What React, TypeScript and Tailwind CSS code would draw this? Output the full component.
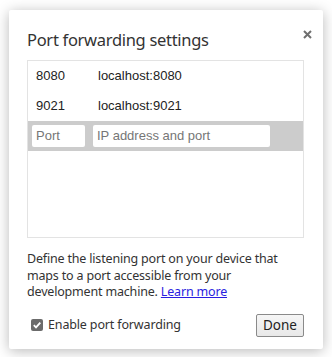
import React from "react";

export default function App() {
  return (
    <div className="w-[332px] h-[357px] bg-white pt-[10px] pl-[9px]" style={{ fontFamily: '"Noto Sans", "Open Sans", sans-serif' }}>
      <div className="relative w-[314px] h-[339px] bg-white rounded-[2px] shadow-[0_2px_14px_rgba(0,0,0,0.28)] pl-[18px] pr-[19px] pt-[18px]">
        <button className="absolute right-[11px] top-[20px] w-[9px] h-[9px] flex items-center justify-center">
          <svg width="9" height="9" viewBox="0 0 9 9">
            <path d="M1 1 L8 8 M8 1 L1 8" stroke="#6f6f6f" strokeWidth="2" />
          </svg>
        </button>
        <div className="text-[16.5px] tracking-[-0.3px] leading-[24px] text-[#333] h-[32px]">Port forwarding settings</div>
        <div className="border border-[#e3e3e3] h-[178px] text-[13px] text-[#222]" style={{ fontFamily: '"Liberation Sans", Arial, sans-serif' }}>
          <div className="h-[30px] flex items-center pl-[8px]">
            <span className="w-[62px]">8080</span>
            <span>localhost:8080</span>
          </div>
          <div className="h-[30px] flex items-center pl-[8px]">
            <span className="w-[62px]">9021</span>
            <span>localhost:9021</span>
          </div>
          <div className="h-[30px] flex items-center bg-[#cccccc] pl-[4px] gap-[8px]">
            <div className="w-[53px] h-[22px] bg-white rounded-[2px] pl-[4px] flex items-center text-[#767676]">Port</div>
            <div className="w-[177px] h-[22px] bg-white rounded-[2px] pl-[4px] flex items-center text-[#767676]">IP address and port</div>
          </div>
        </div>
        <p className="mt-[13px] text-[12.5px] tracking-[-0.18px] leading-[16.5px] text-[#333]">
          Define the listening port on your device that maps to a port accessible from your development machine.{" "}
          <a className="text-[#2a1ee0] underline">Learn more</a>
        </p>
        <div className="mt-[13px] flex items-center justify-between">
          <div className="flex items-center ml-[4px] gap-[5px] text-[12.5px] tracking-[-0.15px] text-[#333]">
            <div className="w-[12px] h-[12px] bg-[#6b6b6b] rounded-[2px] flex items-center justify-center">
              <svg width="10" height="10" viewBox="0 0 10 10">
                <path d="M1.8 5.2 L4 7.4 L8.3 2.6" stroke="white" strokeWidth="1.8" fill="none" />
              </svg>
            </div>
            <span>Enable port forwarding</span>
          </div>
          <button className="w-[48px] h-[23px] border border-[#8a8a8a] rounded-[2px] bg-gradient-to-b from-[#f6f6f6] to-[#e8e8e8] text-[13.5px] text-[#222] flex items-center justify-center">
            Done
          </button>
        </div>
      </div>
    </div>
  );
}
